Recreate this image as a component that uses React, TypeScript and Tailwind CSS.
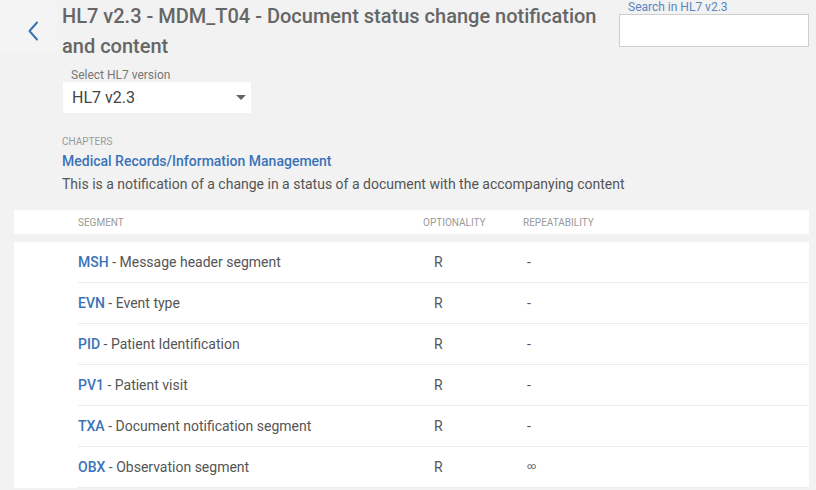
import React from "react";

const segments = [
  { code: "MSH", name: "Message header segment", opt: "R", rep: "-" },
  { code: "EVN", name: "Event type", opt: "R", rep: "-" },
  { code: "PID", name: "Patient Identification", opt: "R", rep: "-" },
  { code: "PV1", name: "Patient visit", opt: "R", rep: "-" },
  { code: "TXA", name: "Document notification segment", opt: "R", rep: "-" },
  { code: "OBX", name: "Observation segment", opt: "R", rep: "∞" },
];

export default function App() {
  return (
    <div
      className="w-[816px] h-[490px] overflow-hidden bg-[#f2f2f2] text-[#555]"
      style={{ fontFamily: "Roboto, 'Liberation Sans', sans-serif" }}
    >
      {/* Header */}
      <div className="flex">
        <div className="w-[57px] h-[52px] bg-[#f4f4f4] flex justify-center pl-[8px] pt-[21px]">
          <svg width="14" height="20" viewBox="0 0 14 20" fill="none">
            <path d="M11 1.5 L3.5 10 L11 18.5" stroke="#3a72b3" strokeWidth="2" strokeLinecap="round" strokeLinejoin="round" />
          </svg>
        </div>
        <div className="w-[548px] pl-[5px]">
          <h1 className="text-[20px] leading-[30px] font-medium text-[#666] pt-px">
            HL7 v2.3 - MDM_T04 - Document status change notification and content
          </h1>
          <div className="mt-[7px] ml-px">
            <div className="text-[12px] leading-[14px] text-[#777] pl-[8px]">Select HL7 version</div>
            <div className="w-[188px] h-[31px] bg-white flex items-center justify-between pl-[9px] pr-[5px]">
              <span className="text-[16px] text-[#444]">HL7 v2.3</span>
              <svg width="10" height="5" viewBox="0 0 10 5">
                <path d="M0 0 L10 0 L5 5 Z" fill="#666" />
              </svg>
            </div>
          </div>
        </div>
        <div className="ml-[14px] pt-px">
          <div className="text-[12px] leading-[13px] text-[#5b86c0] pl-[9px]">Search in HL7 v2.3</div>
          <div className="w-[190px] h-[33px] bg-white border border-[#cfcfcf]" />
        </div>
      </div>

      {/* Chapter info */}
      <div className="pl-[62px] mt-[23px]">
        <div className="text-[10px] leading-[12px] text-[#999] uppercase">Chapters</div>
        <div className="text-[14px] leading-[20px] font-medium text-[#3b73b9] mt-[3px]">
          Medical Records/Information Management
        </div>
        <div className="text-[14px] leading-[20px] text-[#555] mt-[3px]">
          This is a notification of a change in a status of a document with the accompanying content
        </div>
      </div>

      {/* Table header */}
      <div className="mx-[14px] mt-[16px] w-[795px] h-[24px] bg-white flex items-center text-[10px] text-[#999] uppercase">
        <div className="w-[409px] pl-[64px]">Segment</div>
        <div className="w-[100px]">Optionality</div>
        <div>Repeatability</div>
      </div>

      {/* Table body */}
      <div className="ml-[14px] mt-[8px] w-[795px] bg-white pl-[64px]">
        {segments.map((s) => (
          <div key={s.code} className="h-[41px] flex items-center border-b border-[#ececec] text-[14px]">
            <div className="w-[345px]">
              <span className="font-medium text-[#3b73b9]">{s.code}</span>
              <span className="text-[#555]"> - {s.name}</span>
            </div>
            <div className="w-[100px] pl-[11px] text-[#555]">{s.opt}</div>
            <div className={s.rep === "∞" ? "pl-[4px] text-[9px] text-[#555]" : "pl-[4px] text-[#555]"}>{s.rep}</div>
          </div>
        ))}
      </div>
    </div>
  );
}
